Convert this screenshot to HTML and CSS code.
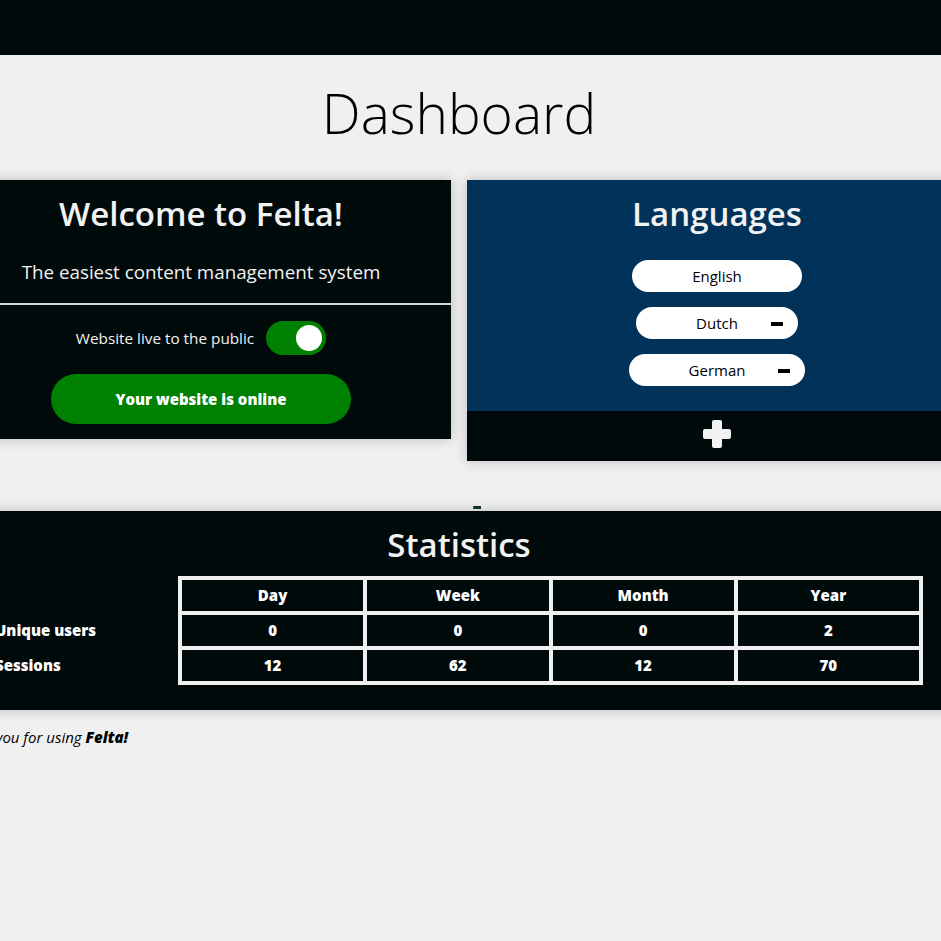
FILE: index.html
```
<!DOCTYPE html>
<html lang="en">
<head>
<meta charset="utf-8">
<title>Dashboard - Felta</title>
<link rel="stylesheet" href="styles.css">
</head>
<body>
<header class="topbar"></header>
<main class="content">
  <h1 class="page-title">Dashboard</h1>
  <div class="cards">
    <section class="card welcome">
      <div class="welcome-top">
        <h2 class="card-title">Welcome to Felta!</h2>
        <p class="subtitle">The easiest content management system</p>
      </div>
      <div class="welcome-bottom">
        <div class="live-row">
          <span class="live-label">Website live to the public</span>
          <span class="toggle"><span class="knob"></span></span>
        </div>
        <button class="online-btn">Your website is online</button>
      </div>
    </section>
    <section class="card languages">
      <div class="lang-body">
        <h2 class="card-title">Languages</h2>
        <ul class="lang-list">
          <li class="pill">English</li>
          <li class="pill">Dutch<span class="minus"></span></li>
          <li class="pill">German<span class="minus"></span></li>
        </ul>
      </div>
      <div class="lang-add">
        <svg class="plus" width="28" height="28" viewBox="0 0 28 28" aria-hidden="true">
          <rect x="9" y="0" width="10" height="28" rx="2" fill="#f2f2f2"/>
          <rect x="0" y="9" width="28" height="10" rx="2" fill="#f2f2f2"/>
        </svg>
      </div>
    </section>
  </div>
  <div class="marker"></div>
  <section class="card stats">
    <h2 class="card-title">Statistics</h2>
    <div class="stats-grid">
      <div class="row-labels">
        <div class="row-label"></div>
        <div class="row-label">Unique users</div>
        <div class="row-label">Sessions</div>
      </div>
      <table class="stats-table">
        <tr><th>Day</th><th>Week</th><th>Month</th><th>Year</th></tr>
        <tr><td>0</td><td>0</td><td>0</td><td>2</td></tr>
        <tr><td>12</td><td>62</td><td>12</td><td>70</td></tr>
      </table>
    </div>
  </section>
  <p class="thanks">Thank you for using <b>Felta!</b></p>
</main>
</body>
</html>
```
FILE: styles.css
```
html, body {
  margin: 0;
  padding: 0;
}
body {
  background: #f0f0f0;
  font-family: "Open Sans", "Noto Sans", sans-serif;
  color: #000;
  overflow: hidden;
}
.topbar {
  height: 55px;
  background: #010a0b;
}
.content {
  width: 1016px;
  margin-left: -49px;
}
.page-title {
  margin: 18px 0 27px;
  font-size: 55px;
  line-height: 80px;
  font-weight: 300;
  text-align: center;
  color: #000;
}
.cards {
  display: flex;
  gap: 16px;
  align-items: flex-start;
}
.card {
  box-shadow: 0 0 12px rgba(0, 0, 0, 0.22);
  color: #f2f2f2;
}
.welcome {
  width: 500px;
  background: #010a0b;
}
.card-title {
  margin: 0;
  font-size: 33px;
  line-height: 42px;
  font-weight: 600;
  text-align: center;
}
.welcome-top {
  padding-top: 13px;
  padding-bottom: 19px;
  border-bottom: 2px solid #d4d4d4;
}
.subtitle {
  margin: 25px 0 0;
  font-size: 18.8px;
  line-height: 24px;
  text-align: center;
}
.welcome-bottom {
  padding: 16px 0 15px;
  display: flex;
  flex-direction: column;
  align-items: center;
  gap: 19px;
}
.live-row {
  display: flex;
  align-items: center;
  gap: 12px;
}
.live-label {
  font-size: 15.3px;
}
.toggle {
  width: 60px;
  height: 34px;
  border-radius: 17px;
  background: #008000;
  display: flex;
  align-items: center;
  justify-content: flex-end;
  padding-right: 4px;
  box-sizing: border-box;
}
.knob {
  width: 26px;
  height: 26px;
  border-radius: 50%;
  background: #fff;
}
.online-btn {
  width: 300px;
  height: 50px;
  border: none;
  border-radius: 25px;
  background: #008000;
  color: #fff;
  font-family: "Open Sans", "Noto Sans", sans-serif;
  font-weight: 800;
  font-size: 15px;
}
.languages {
  width: 500px;
  background: #00325a;
}
.lang-body {
  padding: 13px 0 25px;
}
.lang-list {
  list-style: none;
  margin: 25px 0 0;
  padding: 0;
  display: flex;
  flex-direction: column;
  align-items: center;
  gap: 15px;
}
.pill {
  position: relative;
  height: 32px;
  line-height: 32px;
  padding: 0 60px;
  border-radius: 16px;
  background: #fff;
  color: #000;
  font-size: 15px;
}
.minus {
  position: absolute;
  right: 15px;
  top: 15px;
  width: 12px;
  height: 4px;
  background: #000;
}
.lang-add {
  height: 50px;
  background: #010a0b;
  display: flex;
  justify-content: center;
  padding-top: 9px;
  box-sizing: border-box;
}
.marker {
  width: 8px;
  height: 3px;
  margin: 45px 0 2px calc(50% + 14px);
  background: #0d3a2b;
  border-left: 1px solid #d0201a;
  box-sizing: border-box;
}
.stats {
  background: #010a0b;
  padding: 13px 44px 25px;
}
.stats-grid {
  display: flex;
  margin-top: 10px;
}
.row-labels {
  width: 183px;
  padding-top: 4px;
  flex-shrink: 0;
}
.row-label {
  height: 35px;
  line-height: 31px;
  font-family: "Open Sans", "Noto Sans", sans-serif;
  font-weight: 800;
  font-size: 15px;
  color: #fff;
}
.stats-table {
  flex: 1;
  border-collapse: separate;
  border-spacing: 0;
  border: 2px solid #f0f0f0;
}
.stats-table th,
.stats-table td {
  width: 25%;
  border: 2px solid #f0f0f0;
  padding: 5px 0;
  line-height: 21px;
  text-align: center;
  font-family: "Open Sans", "Noto Sans", sans-serif;
  font-weight: 800;
  font-size: 15px;
  color: #fff;
}
.thanks {
  margin: 16px 0 0;
  font-size: 15px;
  font-style: italic;
  line-height: 22px;
}
.thanks b {
  font-weight: 800;
}
```
